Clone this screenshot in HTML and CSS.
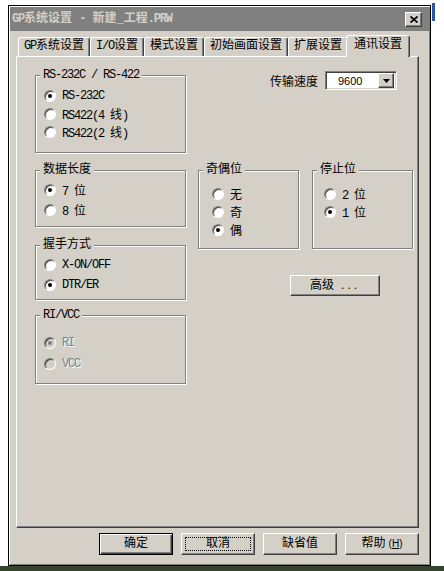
FILE: index.html
```html
<!DOCTYPE html>
<html lang="zh-CN">
<head>
    <meta charset="UTF-8">
    <meta name="viewport" content="width=device-width, initial-scale=1.0">
    <title>GP系统设置</title>
    <link rel="stylesheet" href="styles.css">
</head>
<body>
<div class="window">
    <!-- 标题栏 -->
    <div class="titlebar">
        <span class="title"><span class="en">GP</span>系统设置 <span class="en">-</span> 新建_工程<span class="en">.PRW</span></span>
        <span class="close">
            <svg width="8" height="7" viewBox="0 0 8 7"><path d="M0.5 0.5 L7.5 6.5 M7.5 0.5 L0.5 6.5" stroke="#000" stroke-width="1.7" fill="none"/></svg>
        </span>
    </div>

    <div class="body">
        <div class="tabs">
            <div class="tab"><span class="en">GP</span>系统设置</div>
            <div class="tab"><span class="en">I/O</span>设置</div>
            <div class="tab">模式设置</div>
            <div class="tab">初始画面设置</div>
            <div class="tab">扩展设置</div>
            <div class="tab active">通讯设置</div>
        </div>

        <div class="panel">
            <div class="left-col">
                <fieldset class="group g-rs">
                    <legend><span class="en">RS-232C / RS-422</span></legend>
                    <div class="opts">
                        <div class="opt"><span class="radio on"></span><span class="en">RS-232C</span></div>
                        <div class="opt"><span class="radio"></span><span><span class="en">RS422(4 </span>线<span class="en">)</span></span></div>
                        <div class="opt"><span class="radio"></span><span><span class="en">RS422(2 </span>线<span class="en">)</span></span></div>
                    </div>
                </fieldset>

                <fieldset class="group g-data">
                    <legend>数据长度</legend>
                    <div class="opts">
                        <div class="opt"><span class="radio on"></span><span><span class="en">7 </span>位</span></div>
                        <div class="opt"><span class="radio"></span><span><span class="en">8 </span>位</span></div>
                    </div>
                </fieldset>

                <fieldset class="group g-hand">
                    <legend>握手方式</legend>
                    <div class="opts">
                        <div class="opt"><span class="radio"></span><span class="en">X-ON/OFF</span></div>
                        <div class="opt"><span class="radio on"></span><span class="en">DTR/ER</span></div>
                    </div>
                </fieldset>

                <fieldset class="group g-ri disabled">
                    <legend><span class="en">RI/VCC</span></legend>
                    <div class="opts">
                        <div class="opt"><span class="radio on"></span><span class="en">RI</span></div>
                        <div class="opt"><span class="radio"></span><span class="en">VCC</span></div>
                    </div>
                </fieldset>
            </div>

            <div class="right-col">
                <div class="baud">
                    <span>传输速度</span>
                    <div class="select">
                        <span class="val">9600</span>
                        <span class="drop">
                            <svg width="7" height="4" viewBox="0 0 7 4"><path d="M0 0 H7 L3.5 4 Z" fill="#000"/></svg>
                        </span>
                    </div>
                </div>

                <div class="pair">
                    <fieldset class="group g-parity">
                        <legend>奇偶位</legend>
                        <div class="opts">
                            <div class="opt"><span class="radio"></span><span>无</span></div>
                            <div class="opt"><span class="radio"></span><span>奇</span></div>
                            <div class="opt"><span class="radio on"></span><span>偶</span></div>
                        </div>
                    </fieldset>

                    <fieldset class="group g-stop">
                        <legend>停止位</legend>
                        <div class="opts">
                            <div class="opt"><span class="radio"></span><span><span class="en">2 </span>位</span></div>
                            <div class="opt"><span class="radio on"></span><span><span class="en">1 </span>位</span></div>
                        </div>
                    </fieldset>
                </div>

                <button class="btn adv">高级 <span class="dots">...</span></button>
            </div>
        </div>

        <!-- 底部按钮 -->
        <div class="actions">
            <button class="btn default">确定</button>
            <button class="btn focus">取消</button>
            <button class="btn">缺省值</button>
            <button class="btn">帮助<span class="hk">(<u>H</u>)</span></button>
        </div>
    </div>
</div>
</body>
</html>
```

FILE: styles.css
```css
* {
    box-sizing: border-box;
}

body {
    margin: 0;
    font-family: "Liberation Mono", "Noto Sans CJK SC", monospace;
    font-size: 12px;
    color: #000;
    background:
        linear-gradient(#2c5aa0, #2c5aa0) no-repeat 432px 3px / 3px 18px,
        linear-gradient(to bottom, #fff 566px, #36422c 566px);
    height: 571px;
    overflow: hidden;
}

.en {
    letter-spacing: -1.2px;
}

.window {
    margin: 5px 0 0 8px;
    width: 423px;
    height: 561px;
    padding: 1px;
    border: 1px solid #000;
    background: #d4d0c8;
    box-shadow: inset 1px 1px 0 #fff, inset -1px -1px 0 #808080;
    display: flex;
    flex-direction: column;
}

/* 标题栏 */
.titlebar {
    height: 24px;
    background: #808080;
    display: flex;
    align-items: center;
    justify-content: space-between;
    padding: 0 7px 0 2px;
}

.title {
    color: #d4d0c8;
    font-weight: bold;
    line-height: 14px;
}

.close {
    width: 17px;
    height: 15px;
    display: flex;
    align-items: center;
    justify-content: center;
    background: #d4d0c8;
    border: 1px solid;
    border-color: #fff #404040 #404040 #fff;
    box-shadow: inset -1px -1px 0 #808080;
}

.body {
    flex: 1;
    display: flex;
    flex-direction: column;
    padding: 4px 10px 9px 6px;
}

/* 选项卡 */
.tabs {
    display: flex;
    align-items: flex-end;
    height: 21px;
    padding-left: 2px;
    position: relative;
    z-index: 1;
}

.tab {
    height: 19px;
    padding: 0 5px;
    line-height: 17px;
    background: #d4d0c8;
    border: 1px solid;
    border-color: #fff #404040 transparent #fff;
    border-bottom: 0;
    border-radius: 3px 3px 0 0;
    box-shadow: inset -1px 0 0 #808080;
    white-space: nowrap;
}

.tab.active {
    position: relative;
    height: 22px;
    margin: 0 -2px -1px;
    padding: 0 7px;
    line-height: 18px;
}

.panel {
    flex: 1;
    border: 1px solid;
    border-color: #fff #404040 #404040 #fff;
    box-shadow: inset -1px -1px 0 #808080;
    padding: 11px 0 0 18px;
    display: grid;
    grid-template-columns: 151px 215px;
    column-gap: 12px;
    align-items: start;
}

.left-col,
.right-col {
    display: flex;
    flex-direction: column;
    align-items: flex-start;
}

.left-col .group {
    width: 151px;
}

/* 分组框 */
.group {
    margin: 0;
    padding: 0;
    min-width: 0;
    border: 1px solid #808080;
    box-shadow: inset 1px 1px 0 #fff, 1px 1px 0 #fff;
}

.group legend {
    margin-left: 4px;
    padding: 0 3px;
    line-height: 14px;
    background: #d4d0c8;
}

.opts {
    padding-left: 8px;
}

.opt {
    display: flex;
    align-items: center;
    gap: 6px;
    height: 18px;
    white-space: nowrap;
}

.radio {
    position: relative;
    flex: none;
    width: 12px;
    height: 12px;
    border-radius: 50%;
    border: 1px solid;
    border-color: #808080 #fff #fff #808080;
    background: #fff;
    box-shadow: inset 1px 1px 0 #404040;
}

.radio.on::after {
    content: "";
    position: absolute;
    left: 3px;
    top: 3px;
    width: 4px;
    height: 4px;
    border-radius: 50%;
    background: #000;
}

.g-rs .opts {
    padding-top: 5px;
    padding-bottom: 11px;
}

.g-data {
    margin-top: 10px;
}

.g-data .opts,
.g-hand .opts {
    padding-top: 3px;
    padding-bottom: 6px;
}

.g-data .opt,
.g-hand .opt {
    height: 20px;
}

.g-hand {
    margin-top: 11px;
}

.g-hand .opts {
    padding-bottom: 4px;
}

.g-ri {
    margin-top: 8px;
}

.g-ri .opts {
    padding-top: 10px;
    padding-bottom: 9px;
}

.g-ri .opt {
    height: 21px;
}

.disabled .opt {
    color: #808080;
    text-shadow: 1px 1px 0 #fff;
}

.disabled .radio {
    background: #d4d0c8;
}

.disabled .radio.on::after {
    background: #808080;
}

/* 右侧 */
.baud {
    align-self: stretch;
    display: flex;
    justify-content: flex-end;
    align-items: center;
    gap: 7px;
    margin-top: 3px;
    padding-right: 16px;
}

.select {
    width: 72px;
    height: 19px;
    display: flex;
    align-items: center;
    background: #fff;
    border: 1px solid;
    border-color: #808080 #fff #fff #808080;
    box-shadow: inset 1px 1px 0 #404040, inset -1px -1px 0 #d4d0c8;
    padding: 1px 2px 1px 1px;
}

.val {
    flex: 1;
    padding-left: 11px;
    font-family: "Liberation Sans", sans-serif;
    font-size: 11px;
}

.drop {
    width: 16px;
    height: 15px;
    display: flex;
    align-items: center;
    justify-content: center;
    background: #d4d0c8;
    border: 1px solid;
    border-color: #fff #404040 #404040 #fff;
    box-shadow: inset -1px -1px 0 #808080;
}

.pair {
    display: flex;
    gap: 13px;
    margin-top: 73px;
}

.pair .group {
    width: 101px;
}

.g-parity .opts,
.g-stop .opts {
    padding-top: 8px;
    padding-bottom: 9px;
}

.g-parity .opts {
    padding-left: 13px;
}

.g-stop .opts {
    padding-left: 11px;
}

/* 按钮 */
.btn {
    font: inherit;
    color: #000;
    width: 74px;
    height: 22px;
    padding: 0;
    background: #d4d0c8;
    border: 1px solid;
    border-color: #fff #404040 #404040 #fff;
    box-shadow: inset -1px -1px 0 #808080;
    line-height: 18px;
}

.btn.adv {
    width: 90px;
    height: 21px;
    margin: 26px 0 0 92px;
}

.dots {
    letter-spacing: 3px;
    font-family: "Liberation Sans", sans-serif;
}

.btn.default {
    border-color: #000;
    box-shadow: inset 1px 1px 0 #fff, inset -1px -1px 0 #404040, inset -2px -2px 0 #808080;
}

.btn.focus {
    outline: 1px dotted #000;
    outline-offset: -5px;
}

.hk {
    font-family: "Liberation Sans", sans-serif;
    font-size: 10px;
    margin-left: 3px;
}

.actions {
    display: flex;
    justify-content: flex-end;
    gap: 8px;
    margin-top: 5px;
}
```
